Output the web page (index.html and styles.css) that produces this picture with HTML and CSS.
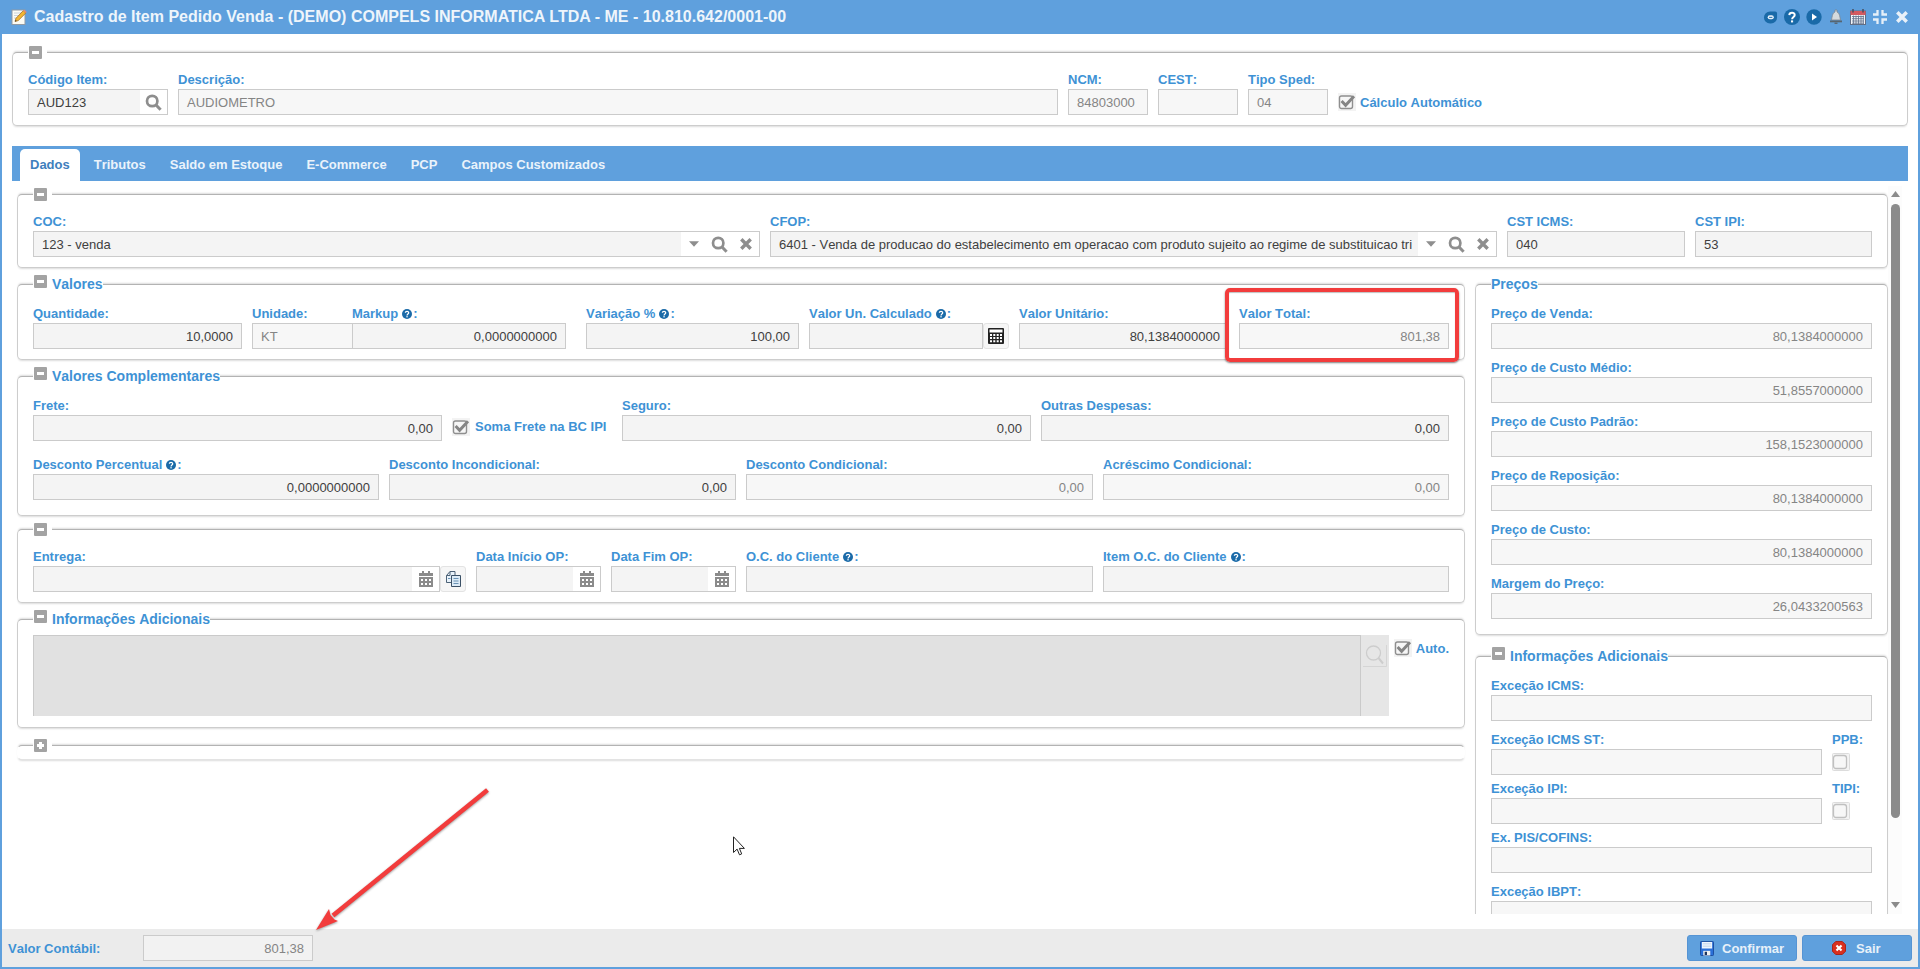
FILE: index.html
```html
<!DOCTYPE html>
<html lang="pt-BR">
<head>
<meta charset="utf-8">
<title>Cadastro de Item Pedido Venda</title>
<link rel="stylesheet" href="styles.css">
</head>
<body>
<svg class="defs" aria-hidden="true">
  <symbol id="minus" viewBox="0 0 13 13"><rect width="13" height="13" rx="1" fill="#a3a3a3"/><rect x="3" y="5" width="7" height="3" fill="#fff"/></symbol>
  <symbol id="plus" viewBox="0 0 13 13"><rect width="13" height="13" rx="1" fill="#a3a3a3"/><path d="M3 5h2V3h3v2h2v3H8v2H5V8H3z" fill="#fff"/></symbol>
  <symbol id="search" viewBox="0 0 17 17"><circle cx="7.200" cy="7" r="5.200" fill="none" stroke="#8e8e8e" stroke-width="2.700"/><path d="M10.800 10.800l4.800 5" stroke="#8e8e8e" stroke-width="3"/></symbol>
  <symbol id="times" viewBox="0 0 12 12"><path d="M1.300 1.300l9.400 9.400M10.700 1.300L1.300 10.700" stroke="#8e8e8e" stroke-width="3.400"/></symbol>
  <symbol id="caret" viewBox="0 0 11 6"><path d="M0 0h11L5.500 6z" fill="#8e8e8e"/></symbol>
  <symbol id="calendar" viewBox="0 0 14 16"><path d="M0 2h3V0h2v2h4V0h2v2h3v3H0zM0 6h14v10H0z" fill="#8b8b8b"/><path d="M2 8h2v2H2zM6 8h2v2H6zM10 8h2v2h-2zM2 12h2v2H2zM6 12h2v2H6zM10 12h2v2h-2z" fill="#fff"/></symbol>
  <symbol id="help" viewBox="0 0 16 16"><circle cx="8" cy="8" r="8" fill="#1a6aa8"/><path d="M5.300 6.100C5.500 3 10.700 3 10.700 6c0 2-2.600 1.900-2.600 4.200" fill="none" stroke="#fff" stroke-width="2"/><rect x="7" y="11.400" width="2.100" height="2" fill="#fff"/></symbol>
  <symbol id="check" viewBox="0 0 18 18"><rect width="18" height="18" fill="#f3f3f3"/><rect x="1.500" y="3" width="13" height="12.500" rx="2" fill="#f6f6f6" stroke="#8f8f8f" stroke-width="1.400"/><path d="M3.600 8l4 4.200 8.400-9" fill="none" stroke="#858585" stroke-width="3"/></symbol>
  <symbol id="uncheck" viewBox="0 0 18 18"><rect x=".5" y=".5" width="17" height="17" rx="1" fill="#f3f3f3" stroke="#dcdcdc"/><rect x="1.500" y="2.500" width="13" height="13" rx="2.500" fill="#f7f7f7" stroke="#c0c0c0" stroke-width="1.300"/></symbol>
</svg>

<div class="window">
  <header class="titlebar">
    <svg class="app-icon" viewBox="0 0 16 16"><rect x="1" y="1" width="13" height="14.500" fill="#fbfbf4" stroke="#8f9aa5"/><path d="M3 4h7M3 6.500h6M3 9h3" stroke="#c9d3dc"/><path d="M4 12.500l1-3.200 7.200-7.600 2.600 2.300-7.600 7.600z" fill="#f2b632" stroke="#a2702a" stroke-width=".8"/><path d="M12.200 1.700l1-1 2.600 2.300-1 1z" fill="#e58a76"/><path d="M4 12.600l.5-1.600 1.200 1z" fill="#333"/></svg>
    <h1>Cadastro de Item Pedido Venda - (DEMO) COMPELS INFORMATICA LTDA - ME - 10.810.642/0001-00</h1>
    <div class="tools">
      <svg viewBox="0 0 16 16"><path d="M1 8.500A6.500 6.500 0 0 1 7.500 2H13q2 0 2 2v4.500A6.500 6.500 0 0 1 8.500 15h-1A6.500 6.500 0 0 1 1 8.500z" fill="#1a6aa8"/><rect x="5" y="6" width="6.500" height="4.500" rx="2.200" fill="#e8f1fa"/><path d="M6.500 8.400h3.500" stroke="#1a6aa8"/></svg>
      <svg viewBox="0 0 16 16"><use href="#help"/></svg>
      <svg viewBox="0 0 16 16"><circle cx="8" cy="8" r="7.700" fill="#1a6aa8"/><path d="M6 4.500L11 8l-5 3.500z" fill="#fff"/></svg>
      <svg viewBox="0 0 16 16"><path d="M7 1h2v2c3 1 2.700 5 3.500 8h-9C4.300 8 4 4 7 3z" fill="#d5dade" stroke="#7d8790" stroke-width=".8"/><path d="M2 11.500h12v1.800H2z" fill="#566571"/><path d="M6.500 13.500h3V15h-3z" fill="#596876"/></svg>
      <svg viewBox="0 0 16 16"><rect x=".5" y="2" width="15" height="13.500" fill="#f1f4f8" stroke="#616d83"/><rect x=".5" y="2" width="15" height="4" fill="#d35a60"/><path d="M3 0v3.500M13 0v3.500" stroke="#454d5f" stroke-width="1.500"/><path d="M2 7.500h12M2 9.700h12M2 12h12M2 14.200h12M3.500 6.500V15M6 6.500V15M8.500 6.500V15M11 6.500V15M13.300 6.500V15" stroke="#6a7891" stroke-width=".9"/></svg>
      <svg viewBox="0 0 16 16"><path d="M5.500 1v4.500H1M10.500 1v4.500H15M5.500 15v-4.500H1M10.500 15v-4.500H15" fill="none" stroke="#e6eff8" stroke-width="2.300"/></svg>
      <svg viewBox="0 0 16 16"><path d="M3.300 3.300l9.400 9.400M12.700 3.300l-9.400 9.400" stroke="#e9f1f9" stroke-width="3.500"/></svg>
    </div>
  </header>

  <section class="panel plain top-panel">
    <div class="legend"><svg><use href="#minus"/></svg></div>
    <div class="row row-item">
      <div class="field"><label>Código Item:</label><div class="input"><span>AUD123</span><div class="trig one"><svg class="i-search"><use href="#search"/></svg></div></div></div>
      <div class="field"><label>Descrição:</label><div class="input ro"><span>AUDIOMETRO</span></div></div>
      <div class="field"><label>NCM:</label><div class="input ro"><span>84803000</span></div></div>
      <div class="field"><label>CEST:</label><div class="input ro"></div></div>
      <div class="field"><label>Tipo Sped:</label><div class="input ro"><span>04</span></div></div>
      <div class="checkline"><svg><use href="#check"/></svg><label>Cálculo Automático</label></div>
    </div>
  </section>

  <nav class="tabs">
    <span class="tab active">Dados</span><span class="tab">Tributos</span><span class="tab">Saldo em Estoque</span><span class="tab">E-Commerce</span><span class="tab">PCP</span><span class="tab">Campos Customizados</span>
  </nav>

  <div class="scroller">
    <main class="content">
      <section class="panel plain">
        <div class="legend"><svg><use href="#minus"/></svg></div>
        <div class="row row-coc">
          <div class="field"><label>COC:</label><div class="input"><span>123 - venda</span><div class="trig three"><svg class="i-caret"><use href="#caret"/></svg><svg class="i-search"><use href="#search"/></svg><svg class="i-times"><use href="#times"/></svg></div></div></div>
          <div class="field"><label>CFOP:</label><div class="input"><span class="long">6401 - Venda de producao do estabelecimento em operacao com produto sujeito ao regime de substituicao tri</span><div class="trig three"><svg class="i-caret"><use href="#caret"/></svg><svg class="i-search"><use href="#search"/></svg><svg class="i-times"><use href="#times"/></svg></div></div></div>
          <div class="field"><label>CST ICMS:</label><div class="input"><span>040</span></div></div>
          <div class="field"><label>CST IPI:</label><div class="input"><span>53</span></div></div>
        </div>
      </section>

      <div class="columns">
        <div class="col-left">
          <section class="panel">
            <div class="legend titled"><svg><use href="#minus"/></svg><h2>Valores</h2></div>
            <div class="row row-valores">
              <div class="field"><label>Quantidade:</label><div class="input num"><span>10,0000</span></div></div>
              <div class="field"><label>Unidade:</label><div class="input ro"><span>KT</span></div></div>
              <div class="field markup"><label>Markup <svg class="i-help"><use href="#help"/></svg>:</label><div class="input num"><span>0,0000000000</span></div></div>
              <div class="field"><label>Variação % <svg class="i-help"><use href="#help"/></svg>:</label><div class="input num"><span>100,00</span></div></div>
              <div class="field"><label>Valor Un. Calculado <svg class="i-help"><use href="#help"/></svg>:</label><div class="with-btn"><div class="input"></div><div class="sq-btn"><svg class="i-calc" viewBox="0 0 16 16"><rect width="16" height="16" rx="1" fill="#222"/><path d="M1.500 1.500h13v3h-13z" fill="#fff"/><path d="M2 6h2v2H2zM5.300 6h2v2h-2zM8.700 6h2v2h-2zM12 6h2v2h-2zM2 9h2v2H2zM5.300 9h2v2h-2zM8.700 9h2v2h-2zM12 9h2v2h-2zM2 12.300h2v2H2zM5.300 12.300h2v2h-2zM8.700 12.300h2v2h-2zM12 12.300h2v2h-2z" fill="#fff"/></svg></div></div></div>
              <div class="field"><label>Valor Unitário:</label><div class="input num"><span>80,1384000000</span></div></div>
              <div class="field"><label>Valor Total:</label><div class="input num ro"><span>801,38</span></div></div>
            </div>
          </section>

          <section class="panel compl">
            <div class="legend titled"><svg><use href="#minus"/></svg><h2>Valores Complementares</h2></div>
            <div class="row row-frete">
              <div class="field"><label>Frete:</label><div class="input num"><span>0,00</span></div></div>
              <div class="checkline"><svg><use href="#check"/></svg><label>Soma Frete na BC IPI</label></div>
              <div class="field"><label>Seguro:</label><div class="input num"><span>0,00</span></div></div>
              <div class="field"><label>Outras Despesas:</label><div class="input num"><span>0,00</span></div></div>
            </div>
            <div class="row row-desc">
              <div class="field"><label>Desconto Percentual <svg class="i-help"><use href="#help"/></svg>:</label><div class="input num"><span>0,0000000000</span></div></div>
              <div class="field"><label>Desconto Incondicional:</label><div class="input num"><span>0,00</span></div></div>
              <div class="field"><label>Desconto Condicional:</label><div class="input num ro"><span>0,00</span></div></div>
              <div class="field"><label>Acréscimo Condicional:</label><div class="input num ro"><span>0,00</span></div></div>
            </div>
          </section>

          <section class="panel plain">
            <div class="legend"><svg><use href="#minus"/></svg></div>
            <div class="row row-entrega">
              <div class="field"><label>Entrega:</label><div class="with-btn"><div class="input"><span></span><div class="trig one"><svg class="i-cal"><use href="#calendar"/></svg></div></div><div class="sq-btn"><svg class="i-copy" viewBox="0 0 16 16"><path d="M1.500 4.500L5 .5h5v11H1.500z" fill="#e9f2fa" stroke="#4d6277"/><path d="M5 .5v4H1.500" fill="none" stroke="#4d6277"/><path d="M6.500 4.500h9v11h-9z" fill="#dcebf7" stroke="#3b5066"/><path d="M8.500 7.500h5M8.500 10h5M8.500 12.500h5M3 7.500h2.500" stroke="#6a93b5"/></svg></div></div></div>
              <div class="field"><label>Data Início OP:</label><div class="input"><span></span><div class="trig one"><svg class="i-cal"><use href="#calendar"/></svg></div></div></div>
              <div class="field"><label>Data Fim OP:</label><div class="input"><span></span><div class="trig one"><svg class="i-cal"><use href="#calendar"/></svg></div></div></div>
              <div class="field"><label>O.C. do Cliente <svg class="i-help"><use href="#help"/></svg>:</label><div class="input"></div></div>
              <div class="field"><label>Item O.C. do Cliente <svg class="i-help"><use href="#help"/></svg>:</label><div class="input"></div></div>
            </div>
          </section>

          <section class="panel info">
            <div class="legend titled"><svg><use href="#minus"/></svg><h2>Informações Adicionais</h2></div>
            <div class="memo-row">
              <div class="memo"></div>
              <div class="memo-side"><svg viewBox="0 0 24 32"><circle cx="10.500" cy="18" r="7" fill="none" stroke="#cdcdcd" stroke-width="1.300"/><path d="M15.500 23l4.500 5.500" stroke="#cdcdcd" stroke-width="2"/><path d="M23.500 10v21.500H0" fill="none" stroke="#d5d5d5"/></svg></div>
              <div class="checkline auto"><svg><use href="#check"/></svg><label>Auto.</label></div>
            </div>
          </section>

          <section class="panel collapsed">
            <div class="legend"><svg><use href="#plus"/></svg></div>
          </section>
        </div>

        <div class="col-right">
          <section class="panel prices">
            <div class="legend titled bare"><h2>Preços</h2></div>
            <div class="field"><label>Preço de Venda:</label><div class="input num ro"><span>80,1384000000</span></div></div>
            <div class="field"><label>Preço de Custo Médio:</label><div class="input num ro"><span>51,8557000000</span></div></div>
            <div class="field"><label>Preço de Custo Padrão:</label><div class="input num ro"><span>158,1523000000</span></div></div>
            <div class="field"><label>Preço de Reposição:</label><div class="input num ro"><span>80,1384000000</span></div></div>
            <div class="field"><label>Preço de Custo:</label><div class="input num ro"><span>80,1384000000</span></div></div>
            <div class="field"><label>Margem do Preço:</label><div class="input num ro"><span>26,0433200563</span></div></div>
          </section>
          <section class="panel extra">
            <div class="legend titled"><svg><use href="#minus"/></svg><h2>Informações Adicionais</h2></div>
            <div class="field"><label>Exceção ICMS:</label><div class="input ro"></div></div>
            <div class="row row-exc">
              <div class="field"><label>Exceção ICMS ST:</label><div class="input ro"></div></div>
              <div class="field"><label>PPB:</label><svg class="i-box"><use href="#uncheck"/></svg></div>
            </div>
            <div class="row row-exc">
              <div class="field"><label>Exceção IPI:</label><div class="input ro"></div></div>
              <div class="field"><label>TIPI:</label><svg class="i-box"><use href="#uncheck"/></svg></div>
            </div>
            <div class="field"><label>Ex. PIS/COFINS:</label><div class="input ro"></div></div>
            <div class="field"><label>Exceção IBPT:</label><div class="input ro"></div></div>
          </section>
        </div>
      </div>
    </main>
    <div class="scrollbar">
      <svg viewBox="0 0 9 6"><path d="M4.500 0L9 6H0z" fill="#8b8b8b"/></svg>
      <div class="thumb"></div>
      <svg viewBox="0 0 9 6"><path d="M0 0h9L4.500 6z" fill="#8b8b8b"/></svg>
    </div>
  </div>

  <footer class="footer">
    <label>Valor Contábil:</label>
    <div class="input num ro total"><span>801,38</span></div>
    <div class="actions">
      <button class="btn confirm"><svg viewBox="0 0 15 16"><rect x=".5" y=".5" width="14" height="15" rx="1" fill="#2a6fd8" stroke="#194a9c"/><rect x="2" y="1" width="11" height="7" fill="#eef5fd"/><path d="M3 3h9M3 5.500h9" stroke="#bcd1ea"/><rect x="3.500" y="10.500" width="7.500" height="5" fill="#f2f2f2"/><rect x="5" y="11.500" width="2.500" height="3.500" fill="#1d3560"/></svg>Confirmar</button>
      <button class="btn exit"><svg viewBox="0 0 15 15"><path d="M4 .5h7L14.500 4v7L11 14.500H4L.5 11V4z" fill="#d9301f" stroke="#a81e12"/><path d="M4.800 4.800l5.400 5.400M10.200 4.800l-5.400 5.400" stroke="#fff" stroke-width="2.300"/></svg>Sair</button>
    </div>
  </footer>
</div>

<div class="highlight"></div>
<svg class="arrow" viewBox="0 0 180 150"><path class="arrow-line" d="M174.500 7L20 132.500"/><path class="arrow-head" d="M3 147L16 126l1.500 6 4 4.500 3.500 1.500z"/></svg>
<svg class="cursor" viewBox="0 0 13 20"><path d="M.5.8v15.700l3.600-3.400 2.400 5.700 2.200-.9-2.300-5.500h5z" fill="#fff" stroke="#222"/></svg>
</body>
</html>
```

FILE: styles.css
```css
* { box-sizing: border-box; }
body { margin: 0; font: 13px "Liberation Sans", Arial, sans-serif; font-kerning: none; overflow: hidden; }
.defs { position: absolute; width: 0; height: 0; }
svg { display: block; flex: none; }

.window { height: 969px; background: #fff; border: 2px solid #5fa0dd; border-top: 0; display: flex; flex-direction: column; }
.titlebar { height: 34px; flex: none; display: flex; align-items: center; padding-left: 9px; background: #5fa0dd; }
.app-icon { width: 16px; height: 16px; margin-right: 7px; }
.titlebar h1 { margin: 0; font-size: 16px; line-height: 20px; color: #eef5fb; white-space: nowrap; font-kerning: normal; letter-spacing: .01px; }
.tools { margin-left: auto; margin-right: 8px; display: flex; gap: 6px; }
.tools svg { width: 16px; height: 16px; }
.tools svg:first-child { width: 15px; }

label { font-weight: bold; color: #3e92d5; line-height: 19px; height: 20px; padding-top: 1px; white-space: nowrap; display: flex; align-items: center; }
.i-help { width: 10px; height: 10px; margin: 0 1px 0 4px; }

.panel { position: relative; border: 1px solid #cdcdcd; border-top-color: #b3b3b3; border-radius: 5px; padding: 18px 15px 10px; background: #fff; box-shadow: 0 2px 2px -1px rgba(0,0,0,.14), 0 -2px 2px -1px rgba(0,0,0,.14); }
.panel.plain { padding-top: 16px; }
.legend { position: absolute; left: 15px; top: -7px; width: 19px; height: 14px; padding-left: 1px; background: #fff; display: flex; }
.legend svg { width: 13px; height: 13px; }
.legend.titled { width: auto; top: -10px; height: 20px; }
.legend h2 { margin: -1px 0 0 5px; font-size: 14px; line-height: 20px; color: #3e92d5; }
.legend.bare { padding: 0; }
.legend.bare h2 { margin-left: 0; }

.row { display: grid; column-gap: 10px; align-items: end; }
.field { min-width: 0; }
.input { display: flex; align-items: center; height: 26px; border: 1px solid #cbcbcb; background: #f4f4f4; color: #404040; overflow: hidden; min-width: 0; }
.input > span { flex: 1; min-width: 0; margin: 1px 8px 0; white-space: nowrap; line-height: 19px; }
.input > span.long { margin-right: 0; }
.input.ro { background: #f7f7f7; color: #858585; }
.input.num { text-align: right; }
.trig { align-self: stretch; background: #fff; display: flex; align-items: center; flex: none; }
.trig.one { width: 27px; justify-content: center; }
.trig.three { width: 78px; padding-left: 8px; }
.i-search { width: 17px; height: 17px; }
.i-caret { width: 10px; height: 6px; margin-right: 12px; }
.i-times { width: 12px; height: 12px; margin-left: 12px; }
.i-cal { width: 14px; height: 16px; }
.checkline { display: flex; align-items: center; gap: 4px; height: 26px; }
.checkline svg { width: 18px; height: 18px; }

.top-panel { margin: 18px 10px 20px; height: 74px; flex: none; }
.row-item { grid-template-columns: 140px 880px 80px 80px 80px 200px; }

.tabs { flex: none; height: 35px; margin: 0 10px; background: #5fa0dd; display: flex; align-items: flex-end; gap: 4px; padding-left: 8px; }
.tab { height: 32px; line-height: 32px; padding: 0 10px; color: #eaf3fb; font-weight: bold; }
.tab.active { background: #fff; color: #3f80bd; border-radius: 5px 5px 0 0; }

.scroller { flex: none; height: 733px; display: flex; overflow: hidden; padding-left: 15px; }
.content { width: 1871px; padding-top: 13px; flex: none; }
.row-coc { grid-template-columns: 727px 727px 178px 177px; }
.columns { display: flex; gap: 10px; margin-top: 16px; }
.col-left { width: 1448px; }
.col-right { width: 413px; }
.row-valores { grid-template-columns: 209px 101px 213px 213px 200px 210px 210px; }
.markup { margin-left: -11px; margin-right: 10px; }
.with-btn { display: flex; }
.with-btn .input { flex: 1; }
.sq-btn { width: 26px; height: 26px; border: 1px solid #e3e3e3; border-radius: 3px; background: #f6f6f6; display: flex; align-items: center; justify-content: center; }
.i-calc, .i-copy { width: 16px; height: 16px; }
.compl { margin-top: 16px; padding-bottom: 15px; margin-bottom: 13px; }
.row-frete { grid-template-columns: 409px 160px 409px 408px; margin-bottom: 13px; }
.row-desc { grid-template-columns: 346px 347px 347px 346px; }
.row-entrega { grid-template-columns: 433px 125px 125px 347px 346px; }
.row-frete .checkline { gap: 5px; height: 27px; align-items: flex-start; padding-top: 4px; }
.row-frete .checkline label { height: 18px; line-height: 18px; padding: 0; }
.info { margin-top: 16px; padding: 15px 15px 11px; }
.memo-row { display: flex; height: 81px; }
.memo { width: 1328px; background: #e1e1e1; border: 1px solid #cacaca; border-bottom: 0; }
.memo-side { width: 28px; background: #e6e6e6; padding-left: 2px; }
.memo-side svg { width: 24px; height: 32px; }
.auto { margin-left: 5px; }
.panel.collapsed { margin-top: 17px; height: 15px; padding: 0; border-left-color: transparent; border-right-color: transparent; border-bottom-color: #e3e3e3; }

.prices { padding-bottom: 15px; display: grid; row-gap: 8px; }
.extra { margin-top: 21px; height: 300px; }
.extra > .field { margin-bottom: 8px; }
.row-exc { grid-template-columns: 331px 40px; margin-bottom: 3px; align-items: start; }
.i-box { width: 18px; height: 18px; margin-top: 4px; }

.scrollbar { width: 14px; margin-top: 5px; background: #fcfcfc; display: flex; flex-direction: column; align-items: center; padding: 5px 0 6px; }
.scrollbar svg { width: 9px; height: 6px; }
.thumb { width: 9px; height: 614px; margin-top: 7px; margin-bottom: auto; border-radius: 5px; background: #8b8b8b; }

.footer { height: 38px; flex: none; margin-top: auto; background: #ebebeb; display: flex; align-items: center; padding-left: 6px; }
.footer > label { width: 135px; }
.input.ro.total { width: 170px; background: #f2f2f2; }
.actions { margin-left: auto; margin-right: 6px; display: flex; gap: 5px; }
.btn { width: 110px; height: 26px; padding: 0; border: 1px solid #5594d4; border-radius: 3px; background: #5fa0dd; color: #e8f1f9; font: bold 13px "Liberation Sans", Arial, sans-serif; display: flex; align-items: center; gap: 8px; }
.confirm { padding-left: 12px; }
.confirm svg { width: 14px; height: 15px; }
.exit { padding-left: 29px; gap: 10px; }
.exit svg { width: 14px; height: 14px; }

.highlight { position: absolute; left: 1225px; top: 288px; width: 234px; height: 74px; border: 4px solid #f23c3c; border-radius: 5px; box-shadow: 0 1px 2px rgba(0,0,0,.5), inset 0 1px 1px rgba(0,0,0,.25); }
.arrow { position: absolute; left: 313px; top: 783px; width: 180px; height: 150px; filter: drop-shadow(0 1px 1px rgba(0,0,0,.4)); }
.arrow-line { fill: none; stroke: #f23c3c; stroke-width: 4.5; }
.arrow-head { fill: #f23c3c; }
.cursor { position: absolute; left: 733px; top: 836px; width: 13px; height: 20px; }
```
